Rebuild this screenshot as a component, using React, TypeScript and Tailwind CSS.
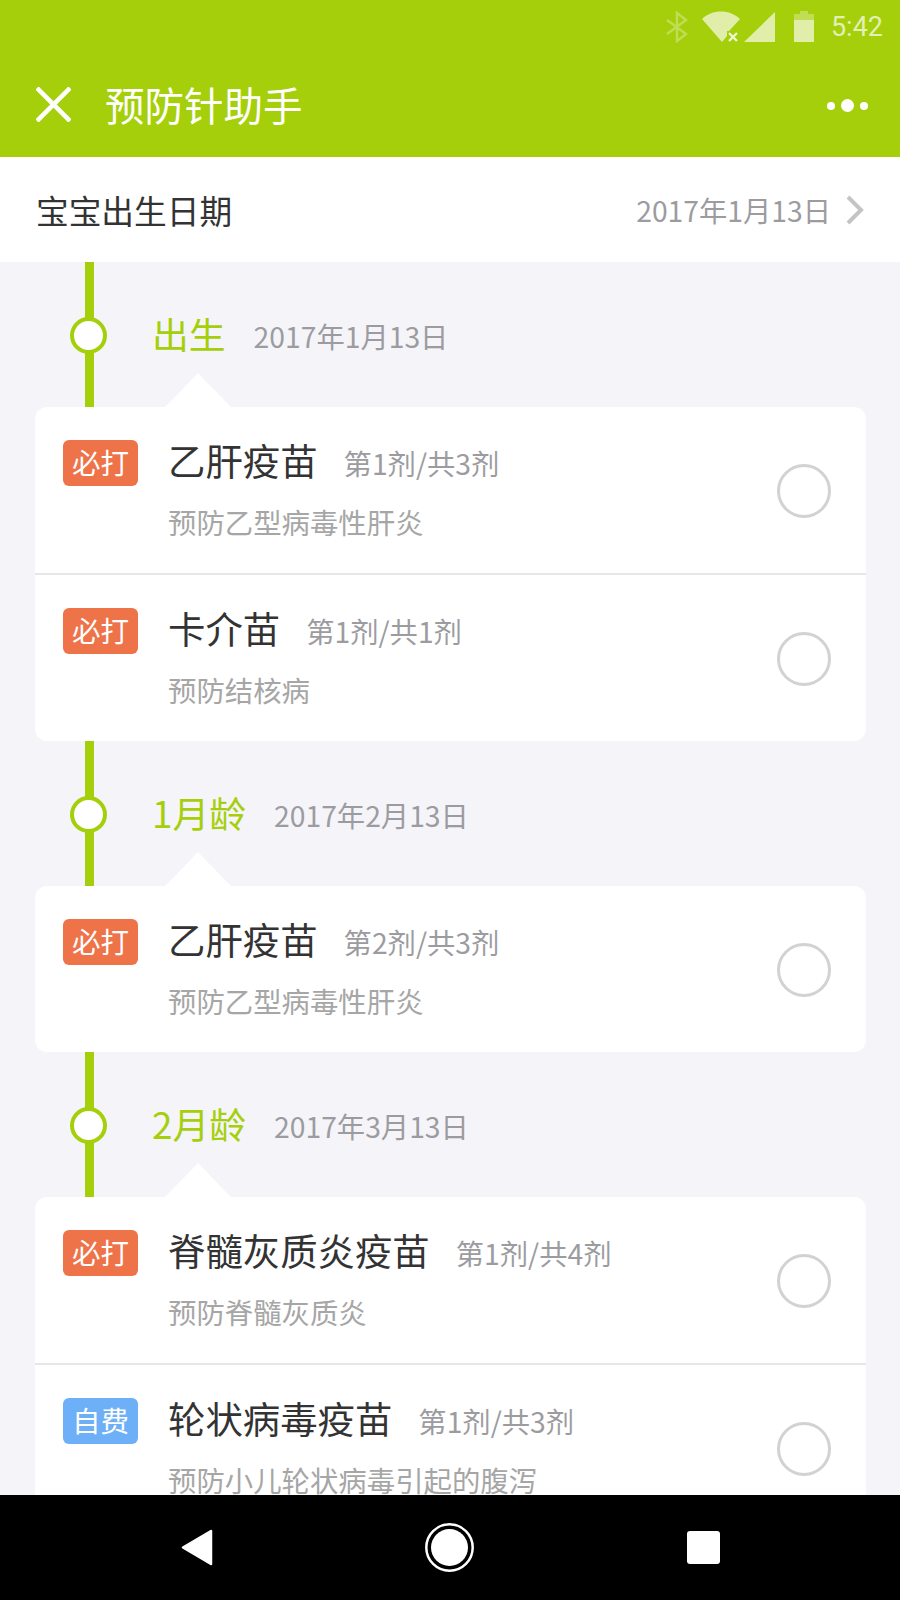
const FONT = '"Noto Sans CJK SC", "Noto Sans", sans-serif';

type Row = { tag: string; name: string; dose: string; desc: string };
type Section = { label: string; date: string; rows: Row[] };

const sections: Section[] = [
  {
    label: "出生",
    date: "2017年1月13日",
    rows: [
      { tag: "必打", name: "乙肝疫苗", dose: "第1剂/共3剂", desc: "预防乙型病毒性肝炎" },
      { tag: "必打", name: "卡介苗", dose: "第1剂/共1剂", desc: "预防结核病" },
    ],
  },
  {
    label: "1月龄",
    date: "2017年2月13日",
    rows: [{ tag: "必打", name: "乙肝疫苗", dose: "第2剂/共3剂", desc: "预防乙型病毒性肝炎" }],
  },
  {
    label: "2月龄",
    date: "2017年3月13日",
    rows: [
      { tag: "必打", name: "脊髓灰质炎疫苗", dose: "第1剂/共4剂", desc: "预防脊髓灰质炎" },
      { tag: "自费", name: "轮状病毒疫苗", dose: "第1剂/共3剂", desc: "预防小儿轮状病毒引起的腹泻" },
    ],
  },
];

function StatusBar() {
  return (
    <div className="flex h-[54px] items-center justify-end pr-[17px]">
      <svg width="24" height="32" viewBox="0 0 24 32" className="mr-[13px]" fill="none" stroke="#ffffff" strokeOpacity="0.3" strokeWidth="2.5">
        <path d="M2 9 L21 23 L12 30 L12 2 L21 9 L2 23" />
      </svg>
      <svg width="40" height="32" viewBox="0 0 40 32" className="mr-[2px]">
        <path d="M0 8 C10 -2 28 -2 38 8 L27 20 L25 20 L25 25 L20 31 Z" fill="#ffffff" fillOpacity="0.65" />
        <path d="M27 22 L35 30 M35 22 L27 30" stroke="#ffffff" strokeOpacity="0.8" strokeWidth="2.4" />
      </svg>
      <svg width="31" height="30" viewBox="0 0 31 30" className="mr-[19px]">
        <path d="M31 0 L31 30 L0 30 Z" fill="#ffffff" fillOpacity="0.65" />
      </svg>
      <svg width="20" height="32" viewBox="0 0 20 32" className="mr-[17px]">
        <path d="M6 0 H14 V3 H20 V9 H0 V3 H6 Z" fill="#ffffff" fillOpacity="0.3" />
        <path d="M0 9 H20 V31 H0 Z" fill="#ffffff" fillOpacity="0.65" />
      </svg>
      <span className="text-[27px] leading-[32px] text-white/70" style={{ fontFamily: "Roboto, sans-serif" }}>
        5:42
      </span>
    </div>
  );
}

function Header() {
  return (
    <div className="flex h-[103px] items-center pl-[36px] pr-[32px] pb-[2px]">
      <svg width="35" height="35" viewBox="0 0 35 35" fill="none" stroke="#ffffff" strokeWidth="4.5">
        <path d="M1 1 L34 34 M34 1 L1 34" />
      </svg>
      <div className="ml-[34px] mb-[2px] text-[39.5px] leading-[50px] text-white">预防针助手</div>
      <div className="ml-auto mt-[2px] flex items-center">
        <span className="h-[8px] w-[8px] rounded-full bg-white" />
        <span className="ml-[6px] h-[13px] w-[13px] rounded-full bg-white" />
        <span className="ml-[6px] h-[8px] w-[8px] rounded-full bg-white" />
      </div>
    </div>
  );
}

function BirthRow() {
  return (
    <div className="flex h-[105px] items-center bg-white pl-[36px] pr-[35px]">
      <div className="text-[32.7px] leading-[44px] text-[#333333]">宝宝出生日期</div>
      <div className="ml-auto flex items-center">
        <span className="text-[28.3px] leading-[40px] text-[#9c9ca0]">2017年1月13日</span>
        <svg width="20" height="30" viewBox="0 0 20 30" fill="none" stroke="#c4c4c4" strokeWidth="4" className="ml-[14px]">
          <path d="M3 2 L16 15 L3 28" />
        </svg>
      </div>
    </div>
  );
}

function Timeline({ label, date }: { label: string; date: string }) {
  return (
    <div className="flex h-[145px] items-stretch pl-[85px]">
      <div className="relative w-[9px] bg-[#a5cf0a]">
        <span className="absolute left-[-15px] top-[55px] h-[37px] w-[37px] rounded-full border-[4px] border-[#a5cf0a] bg-white" />
      </div>
      <div className="flex flex-1 items-start pl-[58px] pt-[45px]">
        <span className="text-[36.8px] leading-[52px] text-[#a5cf0a]">{label}</span>
        <span className="ml-[28px] mt-[5px] text-[28.3px] leading-[48px] text-[#9c9ca0]">{date}</span>
      </div>
    </div>
  );
}

function VaccineRow({ row, last }: { row: Row; last: boolean }) {
  const tagColor = row.tag === "自费" ? "bg-[#6db0f8]" : "bg-[#ee7349]";
  return (
    <div className={`flex items-center pl-[28px] pr-[35px] pt-[2px] ${last ? "h-[166px]" : "h-[168px] border-b-2 border-[#e6e6e6]"}`}>
      <div className="flex flex-1 items-start self-start pt-[31px]">
        <div className={`flex h-[46px] w-[75px] items-center justify-center rounded-[6px] pb-[3px] text-[28.5px] leading-[42px] text-white ${tagColor}`}>
          {row.tag}
        </div>
        <div className="ml-[30px]">
          <div className="flex items-center">
            <span className="mb-[6px] text-[37.4px] leading-[40px] text-[#333333]">{row.name}</span>
            <span className="ml-[26px] text-[28.3px] leading-[46px] text-[#9c9ca0]">{row.dose}</span>
          </div>
          <div className="mt-[15px] text-[28.4px] leading-[42px] text-[#a6a6a6]">{row.desc}</div>
        </div>
      </div>
      <span className="h-[54px] w-[54px] rounded-full border-[3px] border-[#d2d2d2]" />
    </div>
  );
}

function Card({ rows }: { rows: Row[] }) {
  return (
    <div className="relative ml-[35px] mr-[34px] rounded-[12px] bg-white">
      <svg width="66" height="34" viewBox="0 0 66 34" className="absolute left-[130px] top-[-34px]">
        <path d="M0 34 L33 0 L66 34 Z" fill="#ffffff" />
      </svg>
      {rows.map((r, i) => (
        <VaccineRow key={i} row={r} last={i === rows.length - 1} />
      ))}
    </div>
  );
}

function NavBar() {
  return (
    <div className="flex h-[105px] items-center bg-black pl-[181px]">
      <svg width="32" height="37" viewBox="0 0 32 37">
        <path d="M30 2 V35 L2 18.5 Z" fill="#ffffff" stroke="#ffffff" strokeWidth="2.5" strokeLinejoin="round" />
      </svg>
      <svg width="49" height="49" viewBox="0 0 49 49" className="ml-[212px]">
        <circle cx="24.5" cy="24.5" r="23.2" fill="none" stroke="#ffffff" strokeWidth="2.5" />
        <circle cx="24.5" cy="24.5" r="18.5" fill="#ffffff" />
      </svg>
      <span className="ml-[213px] h-[33px] w-[33px] rounded-[3px] bg-white" />
    </div>
  );
}

export default function App() {
  return (
    <div className="flex h-[1600px] w-[900px] flex-col bg-[#f4f4f9]" style={{ fontFamily: FONT }}>
      <div className="bg-[#a5cf0a]">
        <StatusBar />
        <Header />
      </div>
      <BirthRow />
      <div className="min-h-0 flex-1 overflow-hidden">
        {sections.map((s, i) => (
          <div key={i}>
            <Timeline label={s.label} date={s.date} />
            <Card rows={s.rows} />
          </div>
        ))}
      </div>
      <NavBar />
    </div>
  );
}
